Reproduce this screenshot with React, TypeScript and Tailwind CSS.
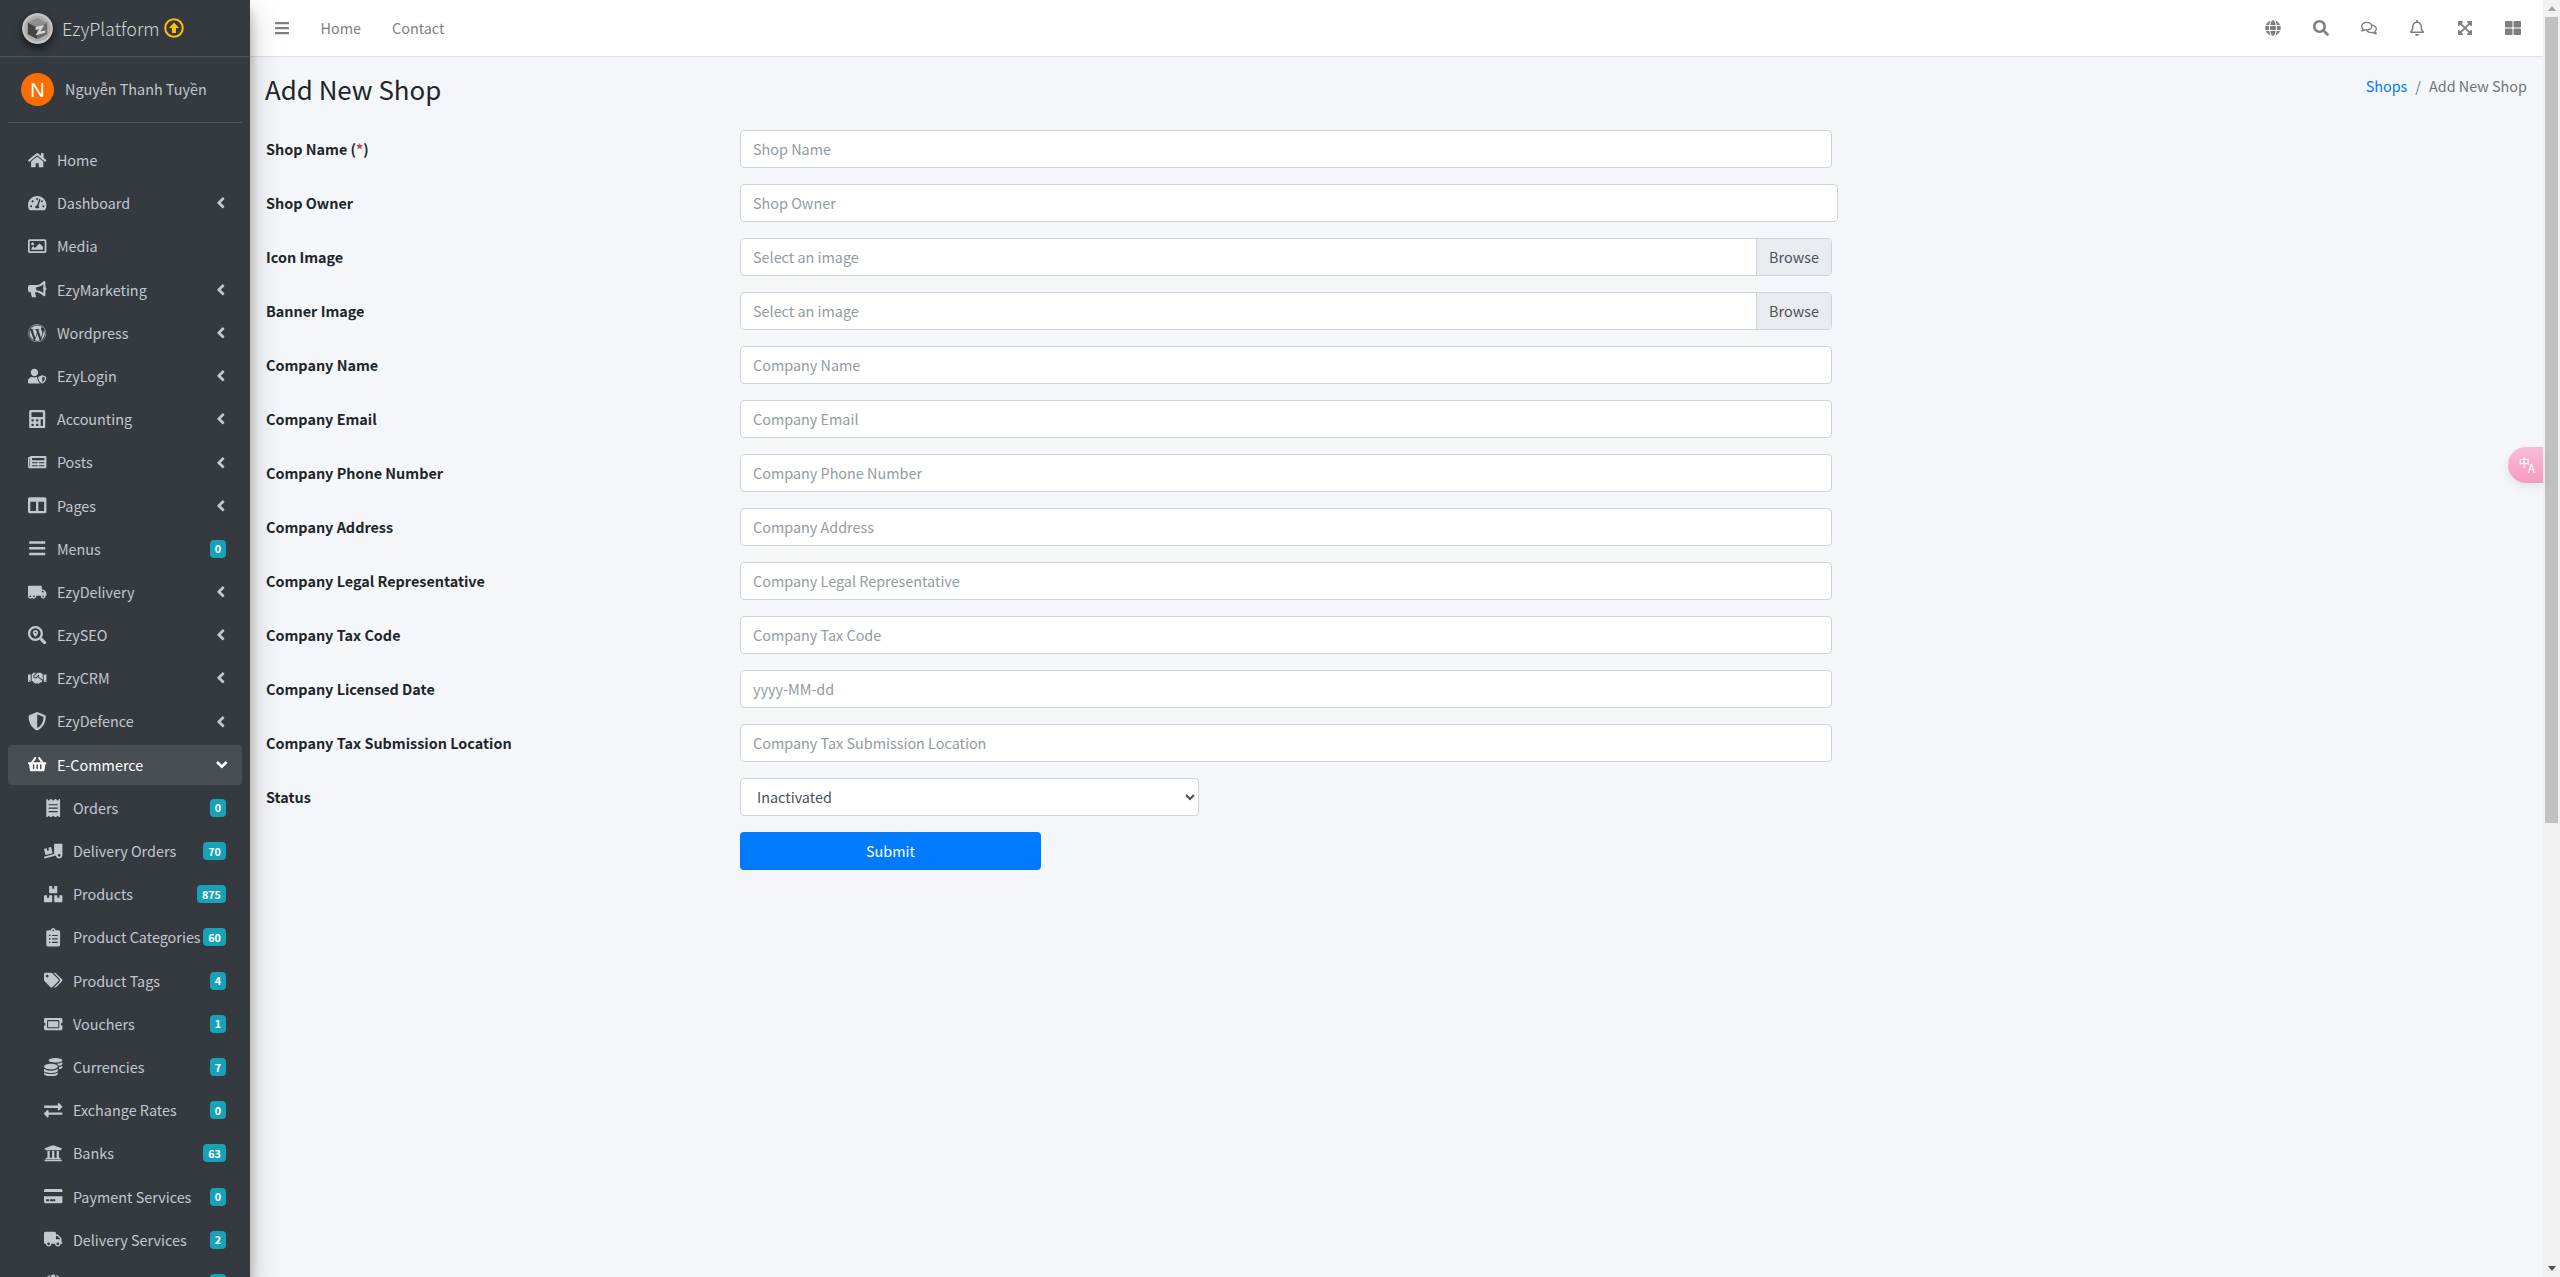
import React from "react";
import {
  FaHome, FaTachometerAlt, FaRegImage, FaBullhorn, FaWordpress, FaUserShield, FaCalculator, FaNewspaper,
  FaColumns, FaBars, FaTruckMoving, FaSearchLocation, FaHandshake, FaShieldAlt, FaShoppingBasket, FaReceipt,
  FaTruckLoading, FaBoxes, FaClipboardList, FaTags, FaTicketAlt, FaCoins, FaExchangeAlt, FaUniversity, FaCreditCard,
  FaTruck, FaGlobe, FaSearch, FaRegComments, FaRegBell, FaExpandArrowsAlt, FaThLarge, FaAngleLeft, FaAngleDown,
} from "react-icons/fa";

type IconT = React.ComponentType<{ className?: string }>;

function Badge({ children }: { children?: React.ReactNode }) {
  return (
    <span className="ml-auto flex h-[18px] min-w-[16px] shrink-0 items-center justify-center rounded-[4px] bg-[#17a2b8] px-[5px] text-[10.8px] leading-none font-bold text-white">
      {children}
    </span>
  );
}

function NavRow({ icon: I, label, badge, arrow }: { icon: IconT; label: string; badge?: string; arrow?: boolean }) {
  return (
    <div className="mb-[3.2px] flex h-[40px] items-center rounded-[4px] pr-[16px] pl-[16.8px] text-[#c2c7d0]">
      <span className="mr-[6.5px] flex w-[25.6px] shrink-0 justify-center">
        <I className="h-[18.4px] w-auto max-w-[22.4px] shrink-0" />
      </span>
      <span className="whitespace-nowrap">{label}</span>
      {badge !== undefined && <Badge>{badge}</Badge>}
      {arrow && <FaAngleLeft className="-mr-[4px] ml-auto h-[17.6px] w-auto" />}
    </div>
  );
}

function SubRow({ icon: I, label, badge }: { icon: IconT; label?: string; badge?: string }) {
  return (
    <div className="mb-[3.2px] flex h-[40px] items-center rounded-[4px] pr-[16px] pl-[32.8px] text-[#c2c7d0]">
      <span className="mr-[6.5px] flex w-[25.6px] shrink-0 justify-center">
        <I className="h-[18.4px] w-auto max-w-[22.4px] shrink-0" />
      </span>
      <span className="whitespace-nowrap">{label}</span>
      <Badge>{badge}</Badge>
    </div>
  );
}

function Logo() {
  return (
    <svg viewBox="0 0 32 32" className="h-[31px] w-[31px] rounded-full shadow-[0_4px_8px_rgba(0,0,0,0.6)]">
      <circle cx="16" cy="16" r="16" fill="#c4c4c4" />
      <circle cx="16" cy="16" r="13.5" fill="#adadad" />
      <polygon points="16,5 26,10 16,15 6,10" fill="#8f8f8f" />
      <polygon points="6,10 16,15 16,27 6,22" fill="#454545" />
      <polygon points="26,10 16,15 16,27 26,22" fill="#6a6a6a" />
      <path d="M14 14.5 L23 12.5 L19 19 L24 18 L24 20.5 L14 23 L18 16.5 L14 17.5 Z" fill="#d4d4d4" />
    </svg>
  );
}

function Sidebar() {
  return (
    <aside className="relative z-10 h-[1277px] w-[250px] shrink-0 overflow-hidden bg-[#343a40] shadow-[0_14px_28px_rgba(0,0,0,0.25),0_10px_10px_rgba(0,0,0,0.22)]">
      <div className="flex h-[57px] items-center border-b border-[#4b545c] pl-[22px]">
        <Logo />
        <span className="ml-[9px] text-[18px] font-light text-[#d2d3d5]">EzyPlatform</span>
        <svg viewBox="0 0 20 20" className="ml-[4px] h-[20px] w-[20px]">
          <circle cx="10" cy="10" r="8.8" fill="none" stroke="#ffc107" strokeWidth="2" />
          <path d="M10 4.5 L15 10 H12 V15 H8 V10 H5 Z" fill="#ffc107" />
        </svg>
      </div>
      <div className="mx-[8px] flex h-[66px] items-center border-b border-[#4f5962] pl-[13px]">
        <span className="flex h-[33px] w-[33px] items-center justify-center rounded-full bg-[#ff6d00] font-['Liberation_Sans',sans-serif] text-[20px] text-white">
          N
        </span>
        <span className="mb-[1px] ml-[11px] whitespace-nowrap text-[#c2c7d0]">Nguyễn Thanh Tuyền</span>
      </div>
      <nav className="mx-[8px] mt-[17px]">
        <NavRow icon={FaHome} label="Home" />
        <NavRow icon={FaTachometerAlt} label="Dashboard" arrow />
        <NavRow icon={FaRegImage} label="Media" />
        <NavRow icon={FaBullhorn} label="EzyMarketing" arrow />
        <NavRow icon={FaWordpress} label="Wordpress" arrow />
        <NavRow icon={FaUserShield} label="EzyLogin" arrow />
        <NavRow icon={FaCalculator} label="Accounting" arrow />
        <NavRow icon={FaNewspaper} label="Posts" arrow />
        <NavRow icon={FaColumns} label="Pages" arrow />
        <NavRow icon={FaBars} label="Menus" badge="0" />
        <NavRow icon={FaTruckMoving} label="EzyDelivery" arrow />
        <NavRow icon={FaSearchLocation} label="EzySEO" arrow />
        <NavRow icon={FaHandshake} label="EzyCRM" arrow />
        <NavRow icon={FaShieldAlt} label="EzyDefence" arrow />
        <div className="mb-[3.2px] flex h-[40px] items-center rounded-[4px] bg-[#494e53] pr-[14px] pl-[16.8px] text-white">
          <span className="mr-[6.5px] flex w-[25.6px] shrink-0 justify-center">
            <FaShoppingBasket className="h-[18.4px] w-auto max-w-[22.4px] shrink-0" />
          </span>
          <span>E-Commerce</span>
          <FaAngleDown className="-mr-[3px] ml-auto h-[17.6px] w-auto" />
        </div>
        <SubRow icon={FaReceipt} label="Orders" badge="0" />
        <SubRow icon={FaTruckLoading} label="Delivery Orders" badge="70" />
        <SubRow icon={FaBoxes} label="Products" badge="875" />
        <SubRow icon={FaClipboardList} label="Product Categories" badge="60" />
        <SubRow icon={FaTags} label="Product Tags" badge="4" />
        <SubRow icon={FaTicketAlt} label="Vouchers" badge="1" />
        <SubRow icon={FaCoins} label="Currencies" badge="7" />
        <SubRow icon={FaExchangeAlt} label="Exchange Rates" badge="0" />
        <SubRow icon={FaUniversity} label="Banks" badge="63" />
        <SubRow icon={FaCreditCard} label="Payment Services" badge="0" />
        <SubRow icon={FaTruck} label="Delivery Services" badge="2" />
        <SubRow icon={FaGlobe} />
      </nav>
    </aside>
  );
}

function TopBar() {
  const icons: IconT[] = [FaGlobe, FaSearch, FaRegComments, FaRegBell, FaExpandArrowsAlt, FaThLarge];
  return (
    <header className="flex h-[57px] items-center border-b border-[#dee2e6] bg-white pr-[6px] pl-[24px] text-[#7f7f7f]">
      <FaBars className="h-[16px] w-auto" />
      <span className="ml-[30.5px]">Home</span>
      <span className="ml-[31px]">Contact</span>
      <div className="ml-auto flex">
        {icons.map((I, k) => (
          <span key={k} className="flex h-[40px] w-[48px] items-center justify-center">
            <I className="h-[16px] w-auto" />
          </span>
        ))}
      </div>
    </header>
  );
}

const inputCls =
  "h-[38px] rounded-[4px] border border-[#ced4da] bg-white px-[12px] pb-[2px] text-[14.4px] text-[#495057] placeholder:text-[#939ba2] outline-none";

function Row({ label, children }: { label: React.ReactNode; children: React.ReactNode }) {
  return (
    <div className="mb-[16px] flex h-[38px] items-center">
      <label className="w-[474px] shrink-0 font-bold text-[#212529]">{label}</label>
      {children}
    </div>
  );
}

function TextRow({ label, wide }: { label: string; wide?: boolean }) {
  return (
    <Row label={label}>
      <input placeholder={label} className={`${inputCls} ${wide ? "w-[1098px]" : "w-[1092px]"}`} />
    </Row>
  );
}

function FileRow({ label }: { label: string }) {
  return (
    <Row label={label}>
      <div className="flex h-[38px] w-[1092px] overflow-hidden rounded-[4px] border border-[#ced4da] bg-white">
        <span className="flex flex-1 items-center px-[12px] text-[#939ba2]">Select an image</span>
        <span className="flex w-[75px] items-center justify-center border-l border-[#ced4da] bg-[#e9ecef] text-[#495057]">
          Browse
        </span>
      </div>
    </Row>
  );
}

function Form() {
  return (
    <form className="pt-[7px]">
      <Row
        label={
          <>
            Shop Name (<span className="text-[#dc3545]">*</span>)
          </>
        }
      >
        <input placeholder="Shop Name" className={`${inputCls} w-[1092px]`} />
      </Row>
      <TextRow label="Shop Owner" wide />
      <FileRow label="Icon Image" />
      <FileRow label="Banner Image" />
      <TextRow label="Company Name" />
      <TextRow label="Company Email" />
      <TextRow label="Company Phone Number" />
      <TextRow label="Company Address" />
      <TextRow label="Company Legal Representative" />
      <TextRow label="Company Tax Code" />
      <Row label="Company Licensed Date">
        <input placeholder="yyyy-MM-dd" className={`${inputCls} w-[1092px]`} />
      </Row>
      <TextRow label="Company Tax Submission Location" />
      <Row label="Status">
        <select defaultValue="Inactivated" className={`${inputCls} w-[459px]`}>
          <option>Inactivated</option>
          <option>Activated</option>
        </select>
      </Row>
      <div className="flex">
        <div className="w-[474px] shrink-0" />
        <button type="button" className="h-[38px] w-[301px] rounded-[4px] bg-[#007bff] text-white">
          Submit
        </button>
      </div>
    </form>
  );
}

function Scrollbar() {
  return (
    <div className="flex h-[1277px] w-[17px] shrink-0 flex-col items-center bg-[#f1f1f1]">
      <div className="flex h-[17px] items-center">
        <span className="h-0 w-0 border-x-[4px] border-b-[5px] border-x-transparent border-b-[#a3a3a3]" />
      </div>
      <div className="h-[806px] w-[13px] bg-[#c1c1c1]" />
      <div className="mt-auto flex h-[17px] items-center">
        <span className="h-0 w-0 border-x-[4px] border-t-[5px] border-x-transparent border-t-[#505050]" />
      </div>
    </div>
  );
}

export default function App() {
  return (
    <div className="relative flex h-[1277px] overflow-hidden bg-[#f4f6f9] font-['Noto_Sans_CJK_JP','Noto_Sans',sans-serif] text-[14.4px] leading-[24px] text-[#212529]">
      <Sidebar />
      <main className="min-w-0 flex-1">
        <TopBar />
        <div className="flex h-[66px] justify-between pr-[16px] pl-[15px]">
          <h1 className="pt-[15px] text-[25.9px] leading-[34px] font-normal text-[#212529]">Add New Shop</h1>
          <div className="flex h-fit items-center pt-[17px] pr-[0px] text-[#6c757d]">
            <span className="text-[#007bff]">Shops</span>
            <span className="mx-[8px]">/</span>
            <span>Add New Shop</span>
          </div>
        </div>
        <div className="pl-[16px]">
          <Form />
        </div>
      </main>
      <Scrollbar />
      <div className="absolute top-[447px] right-[17px] z-20 flex h-[36px] w-[35px] items-center justify-center rounded-l-full bg-gradient-to-b from-[#f9bcd6] to-[#f49cbe] pl-[3px] text-white shadow-[0_4px_10px_rgba(0,0,0,0.08)]">
        <span className="mb-[5px] text-[11px] leading-none">中</span>
        <span className="mt-[6px] -ml-[2px] text-[12px] leading-none">A</span>
      </div>
    </div>
  );
}
